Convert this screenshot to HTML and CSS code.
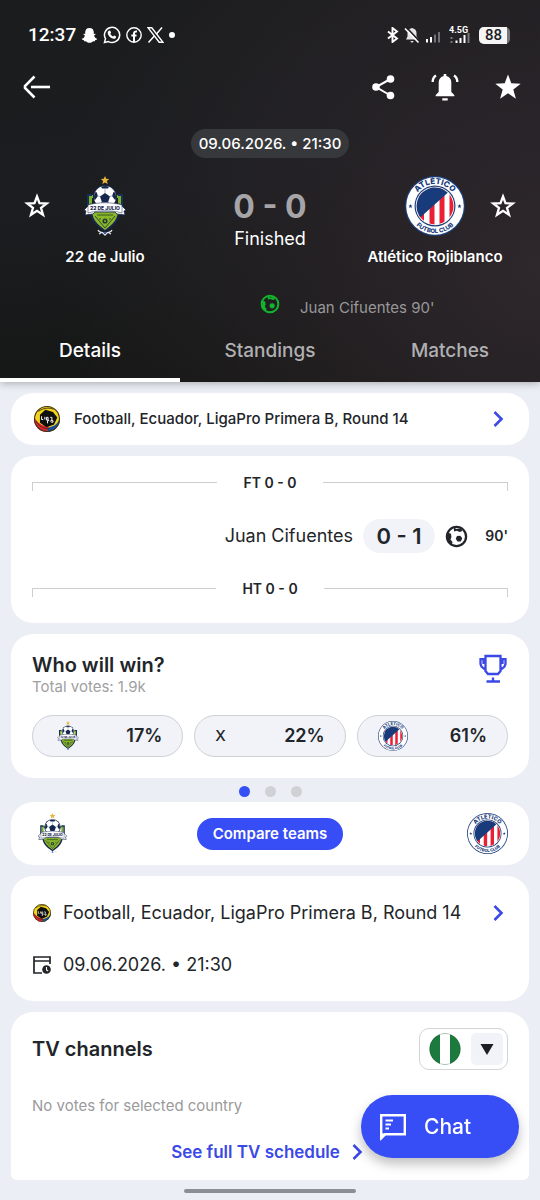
FILE: index.html
```html
<!DOCTYPE html>
<html lang="en">
<head>
<meta charset="utf-8">
<meta name="viewport" content="width=device-width, initial-scale=1">
<title>22 de Julio - Atlético Rojiblanco</title>
<link rel="stylesheet" href="styles.css">
</head>
<body>
<svg class="sprite" aria-hidden="true">
  <defs>
    <path id="ring-top" d="M8 30a22 22 0 0 1 44 0"/>
    <path id="ring-bottom" d="M3 30a27 27 0 0 0 54 0"/>
    <clipPath id="inner-disc"><circle cx="30" cy="30" r="18.500"/></clipPath>
    <clipPath id="ball-disc"><circle cx="30" cy="21" r="11"/></clipPath>
    <clipPath id="liga-disc"><circle cx="12" cy="12" r="12"/></clipPath>
    <clipPath id="flag-disc"><circle cx="16" cy="16" r="15.500"/></clipPath>
  </defs>
  <symbol id="julio" viewBox="0 0 60 60">
    <path d="M30 0l1.200 2.800 3 .2-2.300 2 .8 3L30 6.400 27.300 8l.8-3-2.300-2 3-.2z" fill="#e9b53c"/>
    <path d="M14 19h5v3h-2v10h-3zM46 19h-5v3h2v10h3z" fill="#7fb02c"/>
    <path d="M12 18h5v2h-3v12h-2zM48 18h-5v2h3v12h2z" fill="#16305c"/>
    <circle cx="30" cy="21" r="12" fill="#16264f"/>
    <circle cx="30" cy="21" r="11" fill="#fff"/>
    <g clip-path="url(#ball-disc)" fill="#16264f">
      <path d="M30 17l5 3.500-2 6h-6l-2-6z"/>
      <path d="M25 9h10l-2 3.500h-6zM18 17l3.500-1 1.500 4-3 4-3-1zM42 17l-3.500-1-1.500 4 3 4 3-1z"/>
      <path d="M27 26l-5 5M33 26l5 5M30 12v5M25 20.500l-3-1M35 20.500l3-1" stroke="#8796aa" stroke-width=".7"/>
    </g>
    <path d="M15 35h30c0 9-6 15-15 21-9-6-15-12-15-21z" fill="#16264f"/>
    <path d="M17 36h26c-1 8-5 12-13 18-8-6-12-10-13-18z" fill="#8bb52a"/>
    <path d="M20 40l10 12 10-12" fill="none" stroke="#2c4f35" stroke-width="1"/>
    <circle cx="30" cy="45" r="2.600" fill="#23402f"/><circle cx="30" cy="45" r="1" fill="#8bb52a"/>
    <path d="M22 39h16M24 43h2M34 43h2" stroke="#375d24" stroke-width="1.200"/>
    <path d="M9 34l6-6h30l6 6-2 1 1 4-8-1-2-2H20l-2 2-8 1 1-4z" fill="#fff" stroke="#16264f" stroke-width=".8"/>
    <path d="M13 29c10-3 24-3 34 0v8c-10-3-24-3-34 0z" fill="#fff" stroke="#16264f" stroke-width=".5"/>
    <text x="30" y="34" class="julio-name" text-anchor="middle">22 DE JULIO</text>
    <path d="M23 54c1 3 4 2 5 3l2 2 2-2c1-1 4 0 5-3M26 57l-2 1M34 57l2 1" fill="none" stroke="#e5e9f2" stroke-width="1.300"/>
    <circle cx="30" cy="57" r="1.200" fill="#3b5fa8"/>
  </symbol>
  <symbol id="atletico" viewBox="0 0 60 60">
    <circle cx="30" cy="30" r="30" fill="#1d3f7a"/>
    <circle cx="30" cy="30" r="28.800" fill="#fff"/>
    <circle cx="30" cy="30" r="20.500" fill="#1d3f7a"/>
    <circle cx="30" cy="30" r="19.300" fill="#fff"/>
    <g clip-path="url(#inner-disc)">
      <path d="M14 10h5v40h-5zM24.500 10h5v40h-5zM34.500 10h5v40h-5zM44.500 10h5v40h-5z" fill="#ea1f33"/>
      <path d="M8 48V8h40v4z" fill="#183b7c"/>
    </g>
    <path d="M5.500 28l.6 1.400 1.500.1-1.200 1 .4 1.500-1.300-.8-1.300.8.4-1.500-1.200-1 1.500-.1zM54.500 28l.6 1.400 1.500.1-1.200 1 .4 1.500-1.300-.8-1.300.8.4-1.500-1.200-1 1.500-.1z" fill="#183b7c"/>
    <text class="club-ring"><textPath href="#ring-top" startOffset="50%" text-anchor="middle">ATLÉTICO</textPath></text>
    <text class="club-ring club-ring-low"><textPath href="#ring-bottom" startOffset="50%" text-anchor="middle">FUTBOL CLUB</textPath></text>
  </symbol>
  <symbol id="liga" viewBox="0 0 24 24">
    <g clip-path="url(#liga-disc)">
      <path d="M0 0h24v24H0z" fill="#f1d31c"/>
      <path d="M0 10c3 6 8 9 14 9l-2 5H0z" fill="#df2431"/>
      <path d="M24 10c-1 6-5 9-11 10l-1 4h12z" fill="#1c4f99"/>
      <path d="M5.500 8l5-4.500 7 2 4 5-3 6.500-7 2.500-6-4z" fill="#10100f"/>
      <path d="M4 5c4-3 10-4 14-2M2 14c3 5 7 7 12 7" fill="none" stroke="#3b3017" stroke-width=".8"/>
    </g>
    <circle cx="12" cy="12" r="11.500" fill="none" stroke="#3a3424"/>
    <path d="M7 9.500v3h1.500M10 10v2.500M11.500 10.500H13v2.500h-1.500zM15 10.500h1.500v2.500M12.500 16v-2.500H14M15.500 14.500v-1h2v1.500h-1.500" fill="none" stroke="#fff" stroke-width=".9"/>
  </symbol>
  <symbol id="ball" viewBox="0 0 24 24">
    <circle cx="12" cy="12" r="10" fill="none" stroke="currentColor" stroke-width="2.400"/>
    <path d="M12.500 11.500l3.500-.4 2 2.700-1.500 3.400H13l-1.800-2.900zM9 2.500l3 1.800 4.500-.8 1.500 2.800-2.500 1-3.200-1.400-2.800.8zM3 8l3.300 1 .4 3.800-1 2.300 2.300 2.800-1.300 2L3 17z" fill="currentColor"/>
  </symbol>
  <symbol id="chevron" viewBox="0 0 12 18"><path d="M2.500 2l7 7-7 7" fill="none" stroke="currentColor" stroke-width="2.600"/></symbol>
  <symbol id="star-line" viewBox="0 0 26 26"><path d="M13 3.500l2.500 6.700 7.200.3-5.700 4.400 2 6.900-6-4-6 4 2-6.900-5.700-4.400 7.200-.3z" fill="none" stroke="currentColor" stroke-width="2.300"/></symbol>
</svg>

<header class="hero">
  <div class="status">
    <div class="status-side">
      <span class="clock">12:37</span>
      <svg width="17" height="17" viewBox="0 0 17 17"><path d="M8.500 1c3 0 4.300 2 4.300 4.300v1.600l1.600-.2c.5.800-.3 1.200-1.300 1.700.4 2 1.600 2.800 3.200 3.400-.2 1-1.200 1.100-2 1.300l-.5 1.200c-1.200-.3-1.900-.1-2.700.6-1.500 1.200-3.700 1.200-5.200 0-.8-.7-1.500-.9-2.700-.6l-.5-1.200c-.8-.2-1.800-.3-2-1.300 1.600-.6 2.800-1.400 3.200-3.400-1-.5-1.800-.9-1.300-1.700l1.600.2V5.300C4.200 3 5.500 1 8.500 1z" fill="#fff"/></svg>
      <svg width="18" height="18" viewBox="0 0 18 18"><path d="M1.500 16.500l1-3.800A7.600 7.600 0 1 1 5.500 15.600z" fill="none" stroke="#fff" stroke-width="1.500"/><path d="M6 4.500l1.300.2.800 2-.8 1.100c.6 1.300 1.500 2.100 2.800 2.700l1-1.100 2 1c.2 1.600-1.300 2.600-2.700 2.300-3-.6-5.300-2.900-5.700-5.500C4.600 6 5.200 5 6 4.500z" fill="#fff"/></svg>
      <svg width="16" height="16" viewBox="0 0 16 16"><circle cx="8" cy="8" r="7.200" fill="none" stroke="#fff" stroke-width="1.400"/><path d="M8 15V6.500C8 4.800 9 4.300 11 4.600M5.300 8.600h5.200" fill="none" stroke="#fff" stroke-width="2"/></svg>
      <svg width="17" height="16" viewBox="0 0 17 16"><path d="M1.200.8h3.600l11 14.400h-3.600z" fill="none" stroke="#fff" stroke-width="1.400"/><path d="M15 .5L9.500 7M7.300 9L1.500 15.500" stroke="#fff" stroke-width="1.500"/></svg>
      <span class="status-dot"></span>
    </div>
    <div class="status-side">
      <svg width="12" height="16" viewBox="0 0 12 16"><path d="M1 4.500l9 7-4.500 3.500V1L10 4.500l-9 7" fill="none" stroke="#fff" stroke-width="1.900"/></svg>
      <svg width="16" height="17" viewBox="0 0 16 17"><path d="M8 1c3 .6 4.500 2.300 4.500 5v3.500l2 3H2l1.500-3V6C3.500 3.500 5 1.600 8 1zM6.500 14h3c-.3 2-2.700 2-3 0z" fill="#e4e4e5"/><path d="M2.500 .5l13 14" stroke="#1d1d20" stroke-width="1.600"/><path d="M1 1.500l13.500 14" stroke="#fff" stroke-width="1.600"/></svg>
      <svg width="16" height="16" viewBox="0 0 16 16"><path d="M1 12h2v3.500H1zM5 10h2v5.500H5z" fill="#fff"/><path d="M9 7.500h2v8H9zM13 5h2v10.500h-2z" fill="#717175"/></svg>
      <svg class="cell" width="22" height="18" viewBox="0 0 22 18"><text x="0" y="7" class="cell-label">4.5G</text><path d="M6.500 14.500h2V17h-2zM10.500 12h2v5h-2zM14.500 9h2v8h-2z" fill="#fff"/><path d="M1.500 11h2v2h-2zM1.500 15h2v2h-2zM18.500 7h2v10h-2z" fill="#77777b"/></svg>
      <span class="battery"><span class="battery-level">88</span></span>
    </div>
  </div>

  <div class="toolbar">
    <button class="icon-btn" type="button" aria-label="Back"><svg width="30" height="26" viewBox="0 0 30 26"><path d="M14.500 2.500L5 12v2l9.500 9.500" fill="none" stroke="#fff" stroke-width="2.600"/><path d="M11 13h19" stroke="#fff" stroke-width="2.600"/></svg></button>
    <div class="tools">
      <button class="icon-btn" type="button" aria-label="Share"><svg width="24" height="26" viewBox="0 0 24 26"><path d="M19.500 5L5 13l14.500 8.500" fill="none" stroke="#fff" stroke-width="2"/><circle cx="19.500" cy="5" r="3.800" fill="#fff"/><circle cx="5" cy="13" r="3.800" fill="#fff"/><circle cx="19.500" cy="21.500" r="3.800" fill="#fff"/></svg></button>
      <button class="icon-btn" type="button" aria-label="Notifications"><svg width="28" height="28" viewBox="0 0 28 28"><path d="M12.700 1h2.600v2c3 .7 5 3 5 6V19l3 3v1.200H4.700V22l3-3V9c0-3 2-5.300 5-6zM11.300 25.200h5.400v2.300h-5.400z" fill="#fff"/><path d="M5 2.500C2.500 4 1.700 6 1.700 9M23 2.500c2.500 1.500 3.300 3.500 3.300 6.500" fill="none" stroke="#fff" stroke-width="2.300"/></svg></button>
      <button class="icon-btn" type="button" aria-label="Remove from favourites"><svg width="26" height="26" viewBox="0 0 26 26"><path d="M13 .5l3.300 8.800 9.400.4-7.400 5.800 2.600 9.200L13 19.300l-7.900 5.400 2.600-9.200L.3 9.700l9.400-.4z" fill="#fff"/></svg></button>
    </div>
  </div>

  <div class="kickoff"><time datetime="2026-06-09T21:30">09.06.2026. • 21:30</time></div>

  <div class="versus">
    <div class="team">
      <button class="icon-btn" type="button" aria-label="Follow 22 de Julio"><svg width="26" height="26"><use href="#star-line"/></svg></button>
      <svg class="crest" width="60" height="60"><use href="#julio"/></svg>
      <span></span>
      <span class="team-name">22 de Julio</span>
    </div>
    <div class="result">
      <span class="score">0 - 0</span>
      <span class="state">Finished</span>
    </div>
    <div class="team">
      <span></span>
      <svg class="crest" width="60" height="60"><use href="#atletico"/></svg>
      <button class="icon-btn" type="button" aria-label="Follow Atlético Rojiblanco"><svg width="26" height="26"><use href="#star-line"/></svg></button>
      <span class="team-name">Atlético Rojiblanco</span>
    </div>
  </div>

  <div class="scorers">
    <svg class="scorer-ball" width="20" height="20"><use href="#ball"/></svg>
    <span class="scorer">Juan Cifuentes 90'</span>
  </div>

  <nav class="tabs">
    <a class="tab tab-active" href="#details" aria-current="page">Details</a>
    <a class="tab" href="#standings">Standings</a>
    <a class="tab" href="#matches">Matches</a>
  </nav>
</header>

<main class="feed" id="details">
  <a class="card league" href="#league">
    <svg width="26" height="26"><use href="#liga"/></svg>
    <span class="league-name">Football, Ecuador, LigaPro Primera B, Round 14</span>
    <svg class="chevron" width="12" height="18"><use href="#chevron"/></svg>
  </a>

  <section class="card timeline">
    <div class="period"><span class="rule rule-left"></span><span class="period-name">FT 0 - 0</span><span class="rule rule-right"></span></div>
    <div class="event">
      <span class="event-player">Juan Cifuentes</span>
      <span class="event-score">0 - 1</span>
      <svg class="event-ball" width="23" height="23"><use href="#ball"/></svg>
      <span class="event-minute">90'</span>
    </div>
    <div class="period"><span class="rule rule-left"></span><span class="period-name">HT 0 - 0</span><span class="rule rule-right"></span></div>
  </section>

  <section class="card poll">
    <div class="poll-head">
      <div>
        <h2 class="title">Who will win?</h2>
        <p class="votes">Total votes: 1.9k</p>
      </div>
      <svg width="28" height="30" viewBox="0 0 28 30" fill="none" stroke="#3b49e6" stroke-width="2.300"><path d="M6.500 3h15v15l-2.500 3H9l-2.500-3zM6.500 17L2.500 13.500 1.500 11V6.200h3V11M21.500 17l4-3.500 1-2.500V6.200h-3V11M14 24.500V28M7.500 28.500h13.500"/></svg>
    </div>
    <div class="options">
      <button class="option" type="button" aria-label="22 de Julio 17%"><svg class="option-logo" width="30" height="30"><use href="#julio"/></svg><span>17%</span></button>
      <button class="option" type="button"><span class="option-x">X</span><span>22%</span></button>
      <button class="option" type="button" aria-label="Atlético Rojiblanco 61%"><svg class="option-logo" width="30" height="30"><use href="#atletico"/></svg><span>61%</span></button>
    </div>
  </section>

  <div class="pager"><span class="dot dot-active"></span><span class="dot"></span><span class="dot"></span></div>

  <section class="card compare">
    <svg width="41" height="41"><use href="#julio"/></svg>
    <button class="compare-btn" type="button">Compare teams</button>
    <svg width="41" height="41"><use href="#atletico"/></svg>
  </section>

  <section class="card info">
    <a class="info-row" href="#league">
      <svg class="info-icon" width="18" height="18"><use href="#liga"/></svg>
      <span class="info-text">Football, Ecuador, LigaPro Primera B, Round 14</span>
      <svg class="chevron" width="12" height="18"><use href="#chevron"/></svg>
    </a>
    <div class="info-row">
      <svg class="info-icon" width="18" height="18" viewBox="0 0 18 18"><path d="M9 17H1V1h16v7M1 5h16" fill="none" stroke="#222529" stroke-width="1.700"/><circle cx="13.500" cy="13.500" r="4.300" fill="#222529"/><path d="M13.500 11v3l1.700 1" fill="none" stroke="#fff" stroke-width="1.100"/></svg>
      <time class="info-text" datetime="2026-06-09T21:30">09.06.2026. • 21:30</time>
    </div>
  </section>

  <section class="card tv">
    <div class="tv-head">
      <h2 class="title">TV channels</h2>
      <div class="country">
        <svg width="32" height="32" viewBox="0 0 32 32"><g clip-path="url(#flag-disc)"><path d="M0 0h32v32H0z" fill="#1d7a3e"/><path d="M11 0h10v32H11z" fill="#fff"/></g><circle cx="16" cy="16" r="15.500" fill="none" stroke="#00000020"/></svg>
        <span class="country-arrow"><svg width="14" height="11" viewBox="0 0 14 11"><path d="M.5 0h13L7 11z" fill="#1c1f22"/></svg></span>
        <select class="country-select" aria-label="Country"><option>Nigeria</option></select>
      </div>
    </div>
    <p class="tv-empty">No votes for selected country</p>
    <a class="tv-link" href="#tv">See full TV schedule <svg class="chevron" width="12" height="18"><use href="#chevron"/></svg></a>
  </section>
</main>

<button class="chat" type="button">
  <svg width="28" height="28" viewBox="0 0 28 28"><path d="M2.200 25V2.200h23.600v19H6z" fill="none" stroke="#fff" stroke-width="2.400"/><path d="M2 20v7l6-6z" fill="#fff"/><path d="M6.500 7.500H14M6.500 11.500h5.500M6.500 15.500H10" stroke="#fff" stroke-width="2"/></svg>
  <span>Chat</span>
</button>
<footer class="system-bar"><span class="handle"></span></footer>
</body>
</html>
```
FILE: styles.css
```css
* {
  box-sizing: border-box;
}

body {
  margin: 0;
  min-height: 100vh;
  display: flex;
  flex-direction: column;
  background: #ebeef4;
  color: #222529;
  font-family: Inter, Roboto, "Liberation Sans", sans-serif;
  font-size: 18px;
  line-height: 24px;
}

h2,
p {
  margin: 0;
}

a {
  color: inherit;
  text-decoration: none;
}

button {
  font: inherit;
  color: inherit;
  border: 0;
  padding: 0;
  background: none;
  cursor: pointer;
}

svg {
  display: block;
  flex: none;
}

.sprite {
  position: absolute;
  width: 0;
  height: 0;
  visibility: hidden;
}

.sprite clipPath circle {
  visibility: visible;
}

.julio-name {
  font: 800 5px Inter, sans-serif;
  fill: #16264f;
}

.club-ring {
  font: 800 8px Inter, sans-serif;
  fill: #183b7c;
}

.club-ring-low {
  font-size: 6px;
}

/* Match header */
.hero {
  color: #fff;
  background: radial-gradient(circle at 100% 70%, #2e272c 0%, #2e272c00 80%), linear-gradient(170deg, #1b1c1d 0%, #1b1d20 45%, #131411 100%);
  box-shadow: 0 1px 8px #0000004d;
}

.status {
  display: flex;
  justify-content: space-between;
  align-items: center;
  padding: 24px 30px 0 28px;
}

.status-side {
  display: flex;
  align-items: center;
  gap: 5px;
}

.clock {
  font: 500 19px/22px Roboto, sans-serif;
}

.status-dot {
  width: 6px;
  height: 6px;
  border-radius: 50%;
  background: #fff;
}

.cell {
  margin: 0 3px;
}

.cell-label {
  font: 700 9px Roboto, sans-serif;
  fill: #fff;
}

.battery {
  display: flex;
  width: 31px;
  border-radius: 5px;
  background: #77777b;
}

.battery-level {
  width: 28px;
  padding-left: 6px;
  border-radius: 5px 0 0 5px;
  background: #f5f5f6;
  color: #1c1c1f;
  font: 500 15px/17px Roboto, sans-serif;
}

.toolbar {
  display: flex;
  justify-content: space-between;
  align-items: center;
  padding: 27px 19px 0 20px;
}

.tools {
  display: flex;
  align-items: center;
  gap: 36px;
}

.kickoff {
  width: max-content;
  margin: 28px auto 0;
  padding: 3px 8px 2px;
  border-radius: 15px;
  background: #37383b;
  font-size: 15px;
  font-weight: 500;
}

.versus {
  display: grid;
  grid-template-columns: 210px 1fr 210px;
  margin-top: 18px;
}

.team {
  display: grid;
  grid-template-columns: 1fr 62px 1fr;
  row-gap: 9px;
  place-items: center;
}

.team-name {
  grid-column: 1 / -1;
  font-size: 15px;
  font-weight: 600;
}

.result {
  display: flex;
  flex-direction: column;
  align-items: center;
  padding-top: 11px;
}

.score {
  color: #a5a5a7;
  font-size: 32px;
  line-height: 40px;
  font-weight: 700;
}

.scorers {
  display: grid;
  grid-template-columns: 1fr 20px 1fr;
  column-gap: 20px;
  margin-top: 25px;
}

.scorer-ball {
  grid-column: 2;
  color: #12b52c;
}

.scorer {
  padding-top: 2px;
  color: #98989a;
  font-size: 15px;
}

.tabs {
  display: flex;
  margin-top: 9px;
}

.tab {
  flex: 1;
  padding: 10px 0 15px;
  border-bottom: 4px solid transparent;
  color: #b0b0b2;
  text-align: center;
  font-size: 19px;
  font-weight: 500;
}

.tab-active {
  color: #fff;
  border-color: #fff;
}

/* Cards */
.feed {
  flex: 1;
  display: flex;
  flex-direction: column;
  gap: 11px;
  padding: 11px 11px 0;
}

.card {
  border-radius: 22px;
  background: #fff;
}

.chevron {
  margin-left: auto;
  color: #3b49e6;
}

.league {
  display: flex;
  align-items: center;
  padding: 13px 25px 13px 23px;
}

.league-name {
  margin-left: 14px;
  font-size: 15px;
  font-weight: 500;
}

.timeline {
  padding: 15px 21px 22px;
}

.period {
  display: flex;
  align-items: center;
  gap: 26px;
  font-size: 14px;
  font-weight: 600;
}

.rule {
  flex: 1;
  height: 9px;
  margin-top: 7px;
  border: 0 solid #cdced1;
  border-top-width: 1px;
}

.rule-left {
  border-left-width: 1px;
}

.rule-right {
  border-right-width: 1px;
}

.event {
  display: grid;
  grid-template-columns: 1fr 72px 23px 50px;
  align-items: center;
  margin: 24px 0;
}

.event-player {
  padding-right: 10px;
  text-align: right;
}

.event-score {
  border-radius: 17px;
  background: #f1f3f8;
  text-align: center;
  font-size: 22px;
  line-height: 34px;
  font-weight: 600;
}

.event-ball {
  margin-left: 10px;
}

.event-minute {
  text-align: right;
  font-size: 14px;
  font-weight: 600;
}

.poll {
  padding: 19px 21px 21px;
}

.poll-head {
  display: flex;
  justify-content: space-between;
  padding-right: 1px;
}

.title {
  font-size: 20px;
  line-height: 24px;
  font-weight: 600;
}

.votes {
  color: #a0a0a2;
  font-size: 15px;
  line-height: 20px;
}

.options {
  display: grid;
  grid-template-columns: repeat(3, 1fr);
  gap: 11px;
  margin-top: 18px;
}

.option {
  display: flex;
  justify-content: space-between;
  align-items: center;
  height: 42px;
  padding: 0 20px;
  border: 1px solid #d0d1d4;
  border-radius: 21px;
  background: #f1f3f8;
  font-weight: 600;
}

.option-x {
  font-size: 15px;
  font-weight: 500;
}

.pager {
  display: flex;
  justify-content: center;
  gap: 15px;
  margin: -3px 0 -6px;
}

.dot {
  width: 11px;
  height: 11px;
  border-radius: 50%;
  background: #cfd1d5;
}

.dot-active {
  background: #3450f5;
}

.compare {
  display: flex;
  justify-content: space-between;
  align-items: center;
  padding: 11px 21px;
}

.compare-btn {
  padding: 4px 16px;
  border-radius: 16px;
  background: #374df5;
  color: #fff;
  font-size: 15px;
  font-weight: 600;
}

.info {
  display: flex;
  flex-direction: column;
  gap: 28px;
  padding: 25px 25px 24px 22px;
}

.info-row {
  display: flex;
  align-items: center;
}

.info-text {
  margin-left: 12px;
}

.tv {
  flex: 1;
  display: flex;
  flex-direction: column;
  padding: 16px 21px;
  border-radius: 22px 22px 6px 6px;
}

.tv-head {
  display: flex;
  justify-content: space-between;
  align-items: center;
}

.country {
  position: relative;
  display: flex;
  align-items: center;
  gap: 10px;
  padding: 4px 4px 4px 9px;
  border: 1px solid #d3d4d6;
  border-radius: 10px;
}

.country-arrow {
  display: grid;
  place-items: center;
  width: 32px;
  height: 32px;
  border-radius: 5px;
  background: #f1f3f8;
}

.country-select {
  position: absolute;
  inset: 0;
  width: 100%;
  opacity: 0;
}

.tv-empty {
  margin-top: 24px;
  color: #9a9a9c;
  font-size: 15px;
}

.tv-link {
  display: flex;
  align-items: center;
  gap: 11px;
  width: max-content;
  margin: 22px auto 0;
  padding-right: 6px;
  color: #3b49e6;
  font-size: 17px;
  font-weight: 600;
}

.chat {
  position: fixed;
  right: 21px;
  bottom: 42px;
  display: flex;
  align-items: center;
  gap: 17px;
  width: 158px;
  height: 63px;
  padding: 0 18px;
  border-radius: 32px;
  background: #374df5;
  box-shadow: 0 6px 12px #00000040;
  color: #fff;
  font-size: 21px;
  font-weight: 500;
}

.system-bar {
  display: flex;
  justify-content: center;
  padding: 9px 0 8px;
}

.handle {
  width: 172px;
  height: 4px;
  border-radius: 2px;
  background: #8b8f95;
}
```
